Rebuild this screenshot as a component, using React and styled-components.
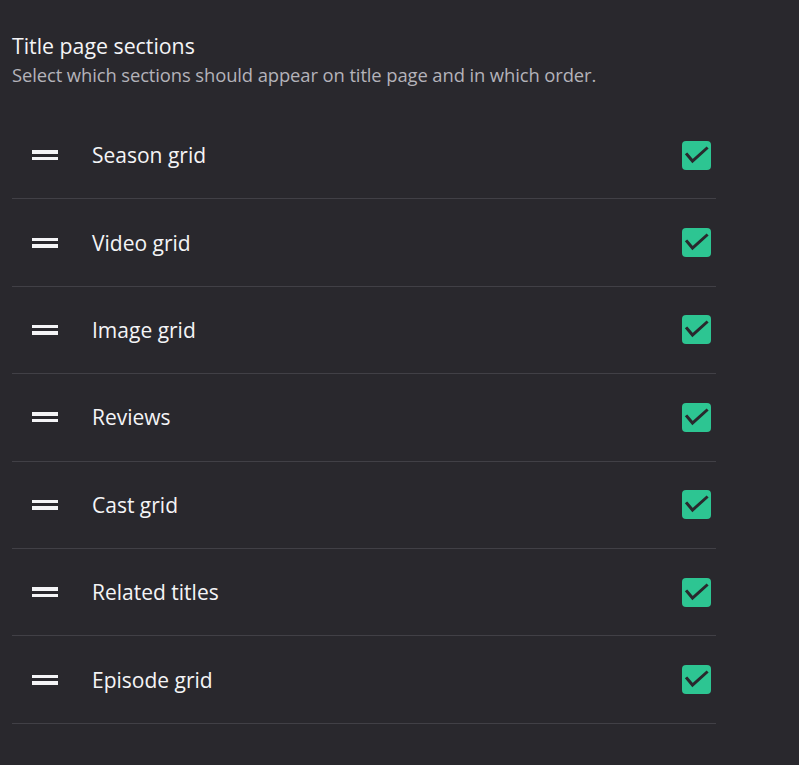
import React, { useState } from "react";
import styled, { createGlobalStyle } from "styled-components";

const GlobalStyle = createGlobalStyle`
  html, body {
    margin: 0;
    padding: 0;
    background: #29282d;
  }
  body {
    font-family: "Open Sans", "Noto Sans", sans-serif;
    color: #f4f4f6;
  }
`;

const sections = [
  "Season grid",
  "Video grid",
  "Image grid",
  "Reviews",
  "Cast grid",
  "Related titles",
  "Episode grid",
];

const Page = styled.div`
  min-height: 765px;
  padding: 32px 12px 0 12px;
  box-sizing: border-box;
  background: #29282d;
`;

const Header = styled.div`
  margin-bottom: 22px;
`;

const Title = styled.div`
  font-size: 21.3px;
  line-height: 28px;
  color: #f4f4f6;
`;

const Subtitle = styled.div`
  font-size: 18.4px;
  line-height: 30px;
  color: #b4b3ba;
  letter-spacing: -0.1px;
`;

const List = styled.div`
  width: 704px;
  display: flex;
  flex-direction: column;
`;

const Row = styled.div`
  height: 87.4px;
  box-sizing: border-box;
  display: flex;
  align-items: center;
  padding: 0 5px 0 20px;
  border-bottom: 1px solid #414046;
`;

const Handle = styled.div`
  width: 26px;
  display: flex;
  flex-direction: column;
  gap: 3px;
  margin-right: 34px;
  cursor: grab;

  span {
    display: block;
    height: 3.5px;
    background: #f4f4f6;
  }
`;

const Label = styled.div`
  flex: 1;
  font-size: 21px;
  color: #f4f4f6;
`;

const Box = styled.button`
  width: 29px;
  height: 29px;
  border-radius: 4px;
  border: none;
  padding: 0;
  display: flex;
  align-items: center;
  justify-content: center;
  background: ${(props) => (props.checked ? "#2dc592" : "transparent")};
  box-shadow: ${(props) => (props.checked ? "none" : "inset 0 0 0 2px #8a8990")};
  cursor: pointer;
`;

const Check = () => (
  <svg width="29" height="29" viewBox="0 0 29 29" fill="none">
    <path
      d="M5 13.5l5.5 6.5L24.5 7.5"
      stroke="#29282d"
      strokeWidth="3"
      strokeLinecap="square"
    />
  </svg>
);

export default function App() {
  const [checked, setChecked] = useState(sections.map(() => true));

  const toggle = (i) => {
    setChecked(checked.map((c, j) => (j === i ? !c : c)));
  };

  return (
    <Page>
      <GlobalStyle />
      <Header>
        <Title>Title page sections</Title>
        <Subtitle>
          Select which sections should appear on title page and in which order.
        </Subtitle>
      </Header>
      <List>
        {sections.map((name, i) => (
          <Row key={name}>
            <Handle>
              <span />
              <span />
            </Handle>
            <Label>{name}</Label>
            <Box checked={checked[i]} onClick={() => toggle(i)}>
              {checked[i] && <Check />}
            </Box>
          </Row>
        ))}
      </List>
    </Page>
  );
}
